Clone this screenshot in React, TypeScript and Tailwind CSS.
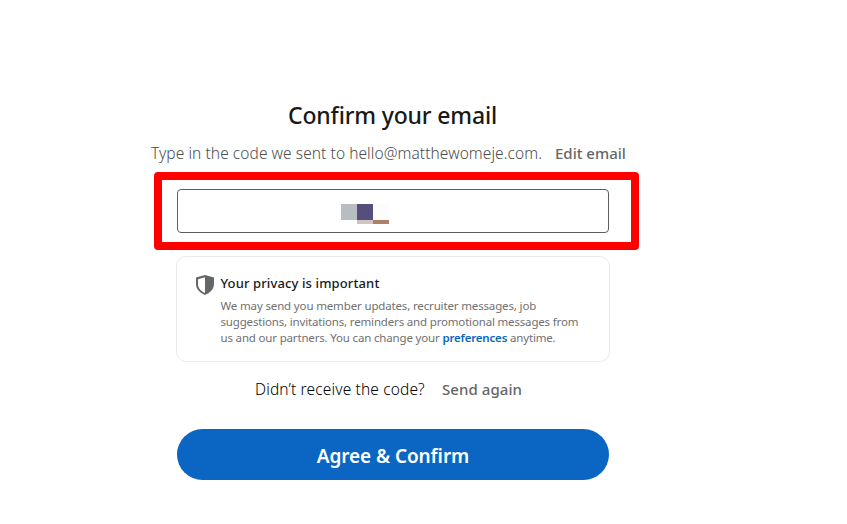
const HalfShieldIcon = () => (
  <svg width="18" height="20" viewBox="0 0 18 20" fill="#666666">
    <path
      fillRule="evenodd"
      d="M9 0 18 2.500V9c0 5-3.600 8.800-9 11C3.600 17.800 0 14 0 9V2.500L9 0ZM9 2.200 2 4.200V9c0 4 2.600 7 7 8.900V2.200Z"
    />
  </svg>
);

// Pixelated block that hides the verification code
const CensoredCode = () => (
  <div className="grid w-12 grid-cols-3 grid-rows-[16px_4px]">
    <div className="bg-[#b7bdc1]" />
    <div className="bg-[#564e7c]" />
    <div className="bg-[#fcfcfc]" />
    <div />
    <div className="bg-[#d3c4c0]" />
    <div className="bg-[#ad8069]" />
  </div>
);

const PrivacyCard = () => {
  return (
    <div className="-mx-px mt-1.5 flex h-[106px] rounded-[10px] border border-[#ebebeb] pt-[18px] pl-[19px]">
      <HalfShieldIcon />
      <div className="ml-[6.5px] whitespace-nowrap">
        <h2 className="text-[13px] leading-4 font-medium tracking-[0.12px] text-[#191919]">
          Your privacy is important
        </h2>
        <p className="mt-[7px] text-[11.5px] leading-4 text-[#707070]">
          <span className="block tracking-[-0.15px]">
            We may send you member updates, recruiter messages, job
          </span>
          <span className="block tracking-[-0.17px]">
            suggestions, invitations, reminders and promotional messages from
          </span>
          <span className="block tracking-[-0.17px]">
            us and our partners. You can change your{" "}
            <a className="font-semibold text-[#0a66c2]">preferences</a> anytime.
          </span>
        </p>
      </div>
    </div>
  );
};

export default function App() {
  return (
    <main className="h-[524px] overflow-hidden bg-white font-['Noto_Sans',sans-serif]">
      <div className="ml-[177px] w-[432px] pt-[99px] whitespace-nowrap">
        <h1 className="ml-[111px] text-[23px] leading-8 font-medium tracking-[-0.16px] text-[#191919]">
          Confirm your email
        </h1>
        <div className="mt-2.5 -ml-[26px] flex h-[31px] text-[15px] leading-6 text-[#666666]">
          <p className="w-[404px] shrink-0 text-[15.5px] font-light tracking-[0.07px] text-[#4d4d4d]">
            Type in the code we sent to hello@matthewomeje.com.
          </p>
          <button className="flex h-6 items-center font-medium">Edit email</button>
        </div>

        <div className="-mr-[30px] -ml-[23px] h-[78px] rounded-[4px] bg-[#ff0000] p-2">
          <div className="h-[62px] bg-white pt-[9px] pr-[22px] pl-[15px]">
            <div className="flex h-11 items-center rounded-[4px] border border-[#5e5e5e] pt-1.5 pl-[163px]">
              <CensoredCode />
            </div>
          </div>
        </div>

        <PrivacyCard />

        <div className="mt-[15px] ml-[78px] flex h-6 text-[15px] leading-6">
          <p className="w-[187px] text-[15.5px] font-light tracking-[0.14px] text-black">
            Didn’t receive the code?
          </p>
          <button className="flex items-center font-medium tracking-[0.07px] text-[#666666]">
            Send again
          </button>
        </div>

        <button className="mt-7 flex h-[51px] w-full items-center justify-center rounded-[26px] bg-[#0a66c2] pt-1 text-[19px] font-semibold tracking-[-0.08px] text-white">
          Agree &amp; Confirm
        </button>
      </div>
    </main>
  );
}
